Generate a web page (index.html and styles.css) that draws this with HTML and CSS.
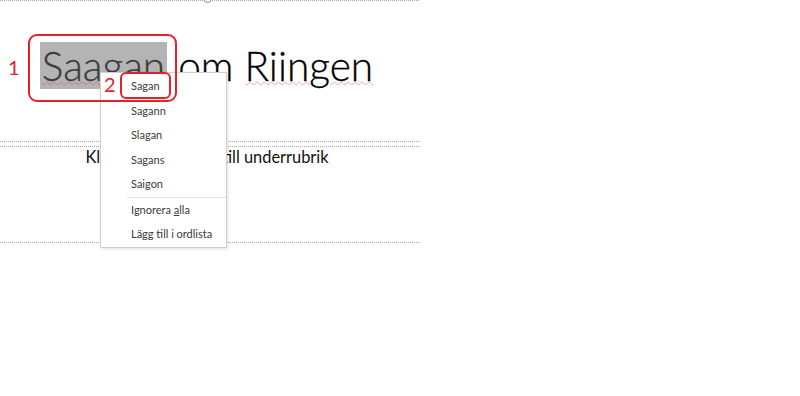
FILE: index.html
```html
<!DOCTYPE html>
<html lang="sv">
<head>
  <meta charset="UTF-8" />
  <title>Stavningskontroll</title>
  <link rel="stylesheet" href="styles.css">
</head>
<body>
  <div class="slide">
    <div class="rotate-handle"></div>

    <div class="placeholder title-box">
      <h1 class="title"><span class="selected typo">Saagan</span> om <span class="typo">Riingen</span></h1>
    </div>

    <div class="placeholder sub-box">
      <p class="subtitle">Klicka för att lägga till underrubrik</p>
    </div>

    <ul class="context-menu">
      <li>Sagan</li>
      <li>Sagann</li>
      <li>Slagan</li>
      <li>Sagans</li>
      <li>Saigon</li>
      <li class="sep"></li>
      <li>Ignorera <u>a</u>lla</li>
      <li>Lägg till i ordlista</li>
    </ul>

    <div class="mark mark-1"></div>
    <span class="mark-label label-1">1</span>
    <div class="mark mark-2"></div>
    <span class="mark-label label-2">2</span>
  </div>
</body>
</html>
```

FILE: styles.css
```css
:root {
  --line: #a8a8a8;
  --red: #e5222c;
  --menu-text: #3a3a3a;
  --font: 'Lato', 'Open Sans', sans-serif;
}

body {
  margin: 0;
  background: #fff;
  font-family: var(--font);
  width: 800px;
  height: 396px;
  overflow: hidden;
}

.slide {
  position: relative;
  width: 419px;
}

.rotate-handle {
  position: absolute;
  left: 203px;
  top: -6px;
  width: 7px;
  height: 7px;
  border: 1px solid #8a8a8a;
  border-radius: 50%;
  background: #fff;
}

.placeholder {
  border-top: 1px dotted var(--line);
  border-bottom: 1px dotted var(--line);
  box-sizing: border-box;
}

.title-box {
  height: 142px;
  padding-top: 41px;
}

.sub-box {
  margin-top: 4px;
  height: 97px;
  padding-top: 0;
}

.title {
  margin: 0;
  padding-right: 6px;
  font-weight: 300;
  font-size: 40.6px;
  line-height: 47px;
  text-align: center;
  color: #000;
  -webkit-text-stroke: 0.3px #000;
}

.selected {
  display: inline-block;
  background: #b4b4b4;
  color: #3c3c3c;
  -webkit-text-stroke: 0.3px #3c3c3c;
  padding: 0 2px;
  height: 47px;
}

.typo {
  text-decoration: underline wavy rgba(230, 50, 50, 0.4);
  text-decoration-thickness: 1px;
  text-underline-offset: 0;
}

.subtitle {
  margin: 0;
  padding-right: 5px;
  text-align: center;
  font-size: 16.4px;
  line-height: 20px;
  color: #111;
}

.context-menu {
  position: absolute;
  left: 100px;
  top: 72px;
  width: 125px;
  margin: 0;
  padding: 1px 0 0;
  list-style: none;
  background: #fff;
  border: 1px solid #cfcfcf;
  box-shadow: 1px 1px 3px rgba(0, 0, 0, 0.12);
  font-size: 11px;
  color: var(--menu-text);
}

.context-menu li {
  height: 24.5px;
  line-height: 24.5px;
  padding-left: 30px;
}

.context-menu .sep {
  height: 1px;
  margin-left: 26px;
  padding: 0;
  background: #e2e2e2;
}

.mark {
  position: absolute;
  border: 2px solid var(--red);
  box-sizing: border-box;
}

.mark-1 {
  left: 28px;
  top: 34px;
  width: 149px;
  height: 68px;
  border-radius: 9px;
}

.mark-2 {
  left: 120px;
  top: 72px;
  width: 51px;
  height: 27px;
  border-radius: 6px;
}

.mark-label {
  position: absolute;
  color: var(--red);
  font-size: 20px;
  line-height: 20px;
}

.label-1 {
  left: 8px;
  top: 57px;
}

.label-2 {
  left: 104px;
  top: 74px;
}
```
